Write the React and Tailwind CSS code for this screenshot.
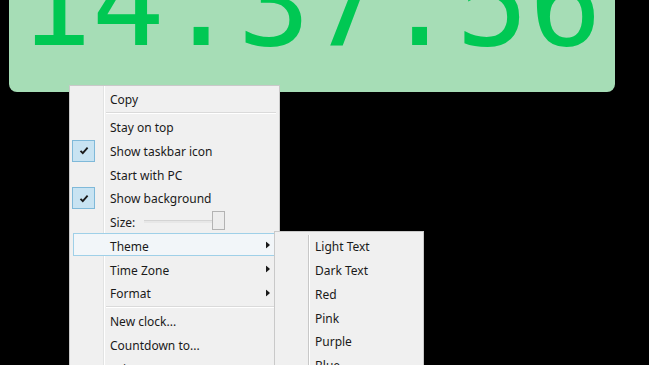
import React from "react";

function Check() {
  return (
    <svg width="10" height="9" viewBox="0 0 10 9">
      <path d="M1.5 4.8 L3.8 7.2 L8.6 1.6" fill="none" stroke="#1a1a1a" strokeWidth="1.8" />
    </svg>
  );
}

function Arrow() {
  return (
    <svg width="4" height="7" viewBox="0 0 4 7" className="absolute right-[9px] top-1/2 -translate-y-1/2">
      <path d="M0 0 L4 3.5 L0 7 Z" fill="#1a1a1a" />
    </svg>
  );
}

function Item({ label, checked, sub, hover }) {
  return (
    <div className="relative h-[23.75px] flex items-center">
      {hover && (
        <div className="absolute left-[3px] right-[3px] top-[-1px] bottom-[1px] border border-[#9fd0e8] bg-[#f2f6f9]" />
      )}
      {checked && (
        <div className="absolute left-[2px] top-[1px] w-[23px] h-[22px] border border-[#7fb9d9] bg-[#c8e3f2] flex items-center justify-center">
          <Check />
        </div>
      )}
      <span className="relative pl-[40px] pt-[3px] text-[12px] text-[#1a1a1a]">{label}</span>
      {sub && <Arrow />}
    </div>
  );
}

function Sep() {
  return (
    <div className="h-[4px] flex flex-col justify-center pl-[36px] pr-[3px]">
      <div className="h-px bg-[#dadada]" />
      <div className="h-px bg-white" />
    </div>
  );
}

export default function App() {
  return (
    <div
      className="relative w-[649px] h-[365px] bg-black overflow-hidden"
      style={{ fontFamily: '"Noto Sans", "Open Sans", sans-serif' }}
    >
      <div className="ml-[9px] w-[606px] h-[92px] rounded-b-[8px] bg-[#a6ddb6] overflow-hidden">
        <div
          className="mt-[-57px] pl-[10px] text-[121px] leading-none text-[#00c853] whitespace-nowrap"
          style={{ fontFamily: '"DejaVu Sans Mono", monospace' }}
        >
          14.37.56
        </div>
      </div>

      {/* main context menu */}
      <div className="absolute left-[69px] top-[85px] w-[211px] h-[300px] border border-[#c9c9c9] bg-[#f0f0f0] pt-[1px]">
        <div className="absolute left-[33px] top-0 bottom-0 w-px bg-[#e2e3e3]" />
        <div className="absolute left-[34px] top-0 bottom-0 w-px bg-white" />
        <Item label="Copy" />
        <Sep />
        <Item label="Stay on top" />
        <Item label="Show taskbar icon" checked />
        <Item label="Start with PC" />
        <Item label="Show background" checked />
        <div className="relative h-[23.75px] flex items-center">
          <span className="relative pl-[40px] pt-[3px] text-[12px] text-[#1a1a1a]">Size:</span>
          <div className="absolute left-[74px] top-[10px] w-[72px] h-[3px] bg-[#e7e7e7] border-t border-[#d4d4d4]" />
          <div className="absolute left-[142px] top-[1px] w-[13px] h-[19px] bg-[#ededed] border border-[#b3b3b3]" />
        </div>
        <Item label="Theme" sub hover />
        <Item label="Time Zone" sub />
        <Item label="Format" sub />
        <Sep />
        <Item label="New clock..." />
        <Item label="Countdown to..." />
        <Item label="Exit" />
      </div>

      {/* submenu */}
      <div className="absolute left-[274px] top-[231px] w-[150px] h-[200px] border border-[#c9c9c9] bg-[#f0f0f0] pt-[2px]">
        <div className="absolute left-[33px] top-[3px] bottom-0 w-px bg-[#c8c8c8]" />
        <div className="absolute left-[34px] top-[3px] bottom-0 w-px bg-white" />
        {["Light Text", "Dark Text", "Red", "Pink", "Purple", "Blue", "Green"].map((t) => (
          <div key={t} className="relative h-[23.75px] flex items-center">
            <span className="pl-[40px] pt-[3px] text-[12px] text-[#1a1a1a]">{t}</span>
          </div>
        ))}
      </div>
    </div>
  );
}
